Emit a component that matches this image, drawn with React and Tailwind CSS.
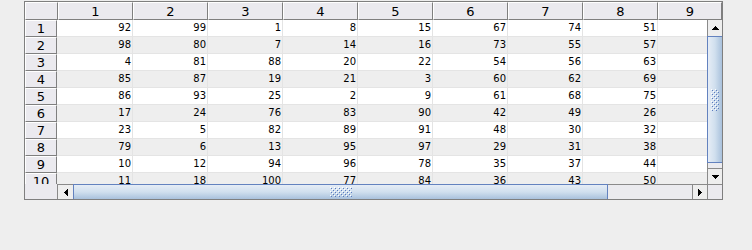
import React from "react";

const DATA = [
  [92, 99, 1, 8, 15, 67, 74, 51],
  [98, 80, 7, 14, 16, 73, 55, 57],
  [4, 81, 88, 20, 22, 54, 56, 63],
  [85, 87, 19, 21, 3, 60, 62, 69],
  [86, 93, 25, 2, 9, 61, 68, 75],
  [17, 24, 76, 83, 90, 42, 49, 26],
  [23, 5, 82, 89, 91, 48, 30, 32],
  [79, 6, 13, 95, 97, 29, 31, 38],
  [10, 12, 94, 96, 78, 35, 37, 44],
  [11, 18, 100, 77, 84, 36, 43, 50],
];

const HCELL =
  "shrink-0 bg-[#ebeaef] border-t border-l border-t-white border-l-white border-r border-b border-r-[#7f7f7f] border-b-[#7f7f7f] flex items-center justify-center text-[13px] leading-none text-black";

function Grip({ w, h }) {
  return (
    <svg width={w} height={h} shapeRendering="crispEdges">
      <defs>
        <pattern id={`bumps-${w}-${h}`} width="4" height="4" patternUnits="userSpaceOnUse">
          <rect x="0" y="0" width="1" height="1" fill="#ffffff" />
          <rect x="2" y="2" width="1" height="1" fill="#ffffff" />
          <rect x="1" y="1" width="1" height="1" fill="#5a7bbf" />
          <rect x="3" y="3" width="1" height="1" fill="#5a7bbf" />
        </pattern>
      </defs>
      <rect x="0" y="0" width={w} height={h} fill={`url(#bumps-${w}-${h})`} />
    </svg>
  );
}

function Arrow({ dir }) {
  if (dir === "up")
    return (
      <svg width="7" height="4" shapeRendering="crispEdges">
        <polygon points="3.5,0 7,4 0,4" fill="#000" />
      </svg>
    );
  if (dir === "down")
    return (
      <svg width="7" height="4" shapeRendering="crispEdges">
        <polygon points="0,0 7,0 3.5,4" fill="#000" />
      </svg>
    );
  if (dir === "left")
    return (
      <svg width="4" height="7" shapeRendering="crispEdges">
        <polygon points="4,0 4,7 0,3.5" fill="#000" />
      </svg>
    );
  return (
    <svg width="4" height="7" shapeRendering="crispEdges">
      <polygon points="0,0 4,3.5 0,7" fill="#000" />
    </svg>
  );
}

export default function App() {
  return (
    <div className="w-[752px] h-[250px] bg-[#eeeeee] pt-[1px] pl-[24px] font-['DejaVu_Sans',sans-serif]">
      <div className="w-[699px] h-[199px] border border-[#7f7f7f] flex flex-col overflow-hidden">
        {/* column header */}
        <div className="h-[18px] flex shrink-0">
          <div className={`w-[33px] h-full ${HCELL}`}></div>
          {[1, 2, 3, 4, 5, 6, 7, 8].map((n) => (
            <div key={n} className={`w-[75px] h-full ${HCELL}`}>
              {n}
            </div>
          ))}
          <div className={`flex-1 h-full ${HCELL}`}>9</div>
        </div>

        {/* body */}
        <div className="h-[164px] flex shrink-0">
          {/* row header */}
          <div className="w-[32px] shrink-0 flex flex-col overflow-hidden">
            {DATA.map((_, i) => (
              <div key={i} className={`w-full h-[17px] ${HCELL}`}>
                {i + 1}
              </div>
            ))}
          </div>

          {/* table */}
          <div className="w-[650px] shrink-0 flex flex-col overflow-hidden">
            {DATA.map((row, i) => (
              <div
                key={i}
                className={`h-[17px] shrink-0 flex ${i % 2 === 0 ? "bg-white" : "bg-[#eeeeee]"}`}
              >
                {row.map((v, j) => (
                  <div
                    key={j}
                    className={`${j === 0 ? "w-[76px]" : "w-[75px]"} h-full shrink-0 border-r border-b border-[#e4e4e4] flex items-center justify-end pr-[1px] text-[10px] leading-none text-black`}
                  >
                    {v}
                  </div>
                ))}
                <div className="w-[75px] h-full shrink-0 border-r border-b border-[#e4e4e4]"></div>
              </div>
            ))}
          </div>

          {/* vertical scrollbar */}
          <div className="w-[15px] shrink-0 flex flex-col">
            <div className="h-[16px] shrink-0 bg-[#eeeeee] border-l border-[#8a8a8a] flex items-center justify-center">
              <Arrow dir="up" />
            </div>
            <div className="h-[127px] shrink-0 border-y border-l border-[#6382bf] bg-linear-to-r from-[#e6edf6] via-[#d0dfee] to-[#a9c1dc] flex items-center justify-center">
              <Grip w={8} h={22} />
            </div>
            <div className="h-[5px] shrink-0 bg-[#ebebef] border-l border-[#8a8a8a]"></div>
            <div className="h-[16px] shrink-0 bg-[#eeeeee] border-l border-t border-[#8a8a8a] flex items-center justify-center">
              <Arrow dir="down" />
            </div>
          </div>
        </div>

        {/* bottom: horizontal scrollbar */}
        <div className="h-[15px] flex shrink-0">
          <div className="w-[32px] shrink-0 bg-[#ebeaef]"></div>
          <div className="w-[650px] shrink-0 flex">
            <div className="w-[16px] shrink-0 bg-[#eeeeee] border-l border-t border-[#8a8a8a] flex items-center justify-center">
              <Arrow dir="left" />
            </div>
            <div className="w-[535px] shrink-0 border-t border-x border-[#6382bf] bg-linear-to-b from-[#e6edf6] via-[#d0dfee] to-[#a9c1dc] flex items-center justify-center">
              <Grip w={22} h={10} />
            </div>
            <div className="w-[84px] shrink-0 bg-[#ebebef] border-t border-[#8a8a8a]"></div>
            <div className="w-[15px] shrink-0 bg-[#eeeeee] border-l border-t border-[#8a8a8a] flex items-center justify-center">
              <Arrow dir="right" />
            </div>
          </div>
          <div className="w-[15px] shrink-0 bg-[#ebeaef] border-l border-t border-[#8a8a8a]"></div>
        </div>
      </div>
    </div>
  );
}
